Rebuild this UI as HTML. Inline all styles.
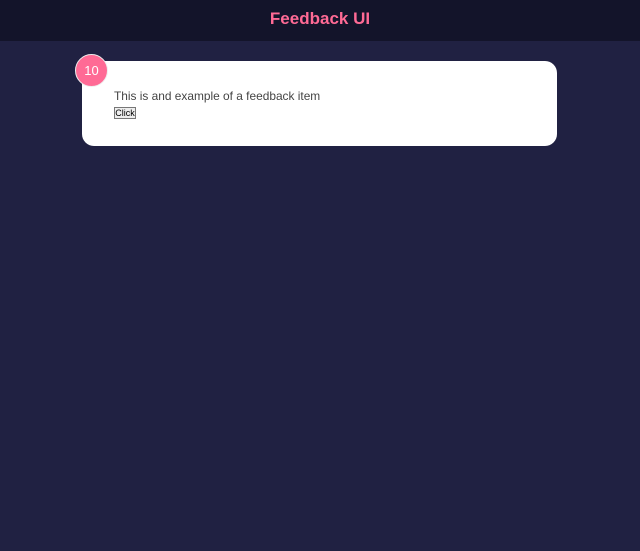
<!DOCTYPE html>
<html><head><style>
body{margin:0;background:#202142;width:640px;height:551px;overflow:hidden;font-family:"Liberation Sans",sans-serif}
.h{height:41px;background:#13142a;text-align:center}
.h span{display:inline-block;line-height:37px;color:#ff6a95;font-weight:bold;font-size:17px}
.card{position:absolute;left:82px;top:61px;width:475px;height:85px;background:#fff;border-radius:12px}
.b{position:absolute;left:75px;top:54px;width:33px;height:33px;border-radius:50%;background:#ff6a95;color:#fff;font-size:13px;text-align:center;line-height:32px;border:1px solid #eee;box-sizing:border-box}
.t{position:absolute;left:114px;top:89px;font-size:11.9px;color:#444}
.btn{position:absolute;left:114px;top:107px;width:22px;height:12px;font-size:9px;padding:0;text-align:center;border:1px solid #777;background:#eee;line-height:10px;box-sizing:border-box}
</style></head><body>
<div class="h"><span>Feedback UI</span></div>
<div class="card"></div>
<div class="b">10</div>
<div class="t">This is and example of a feedback item</div>
<div class="btn">Click</div>
</body></html>
